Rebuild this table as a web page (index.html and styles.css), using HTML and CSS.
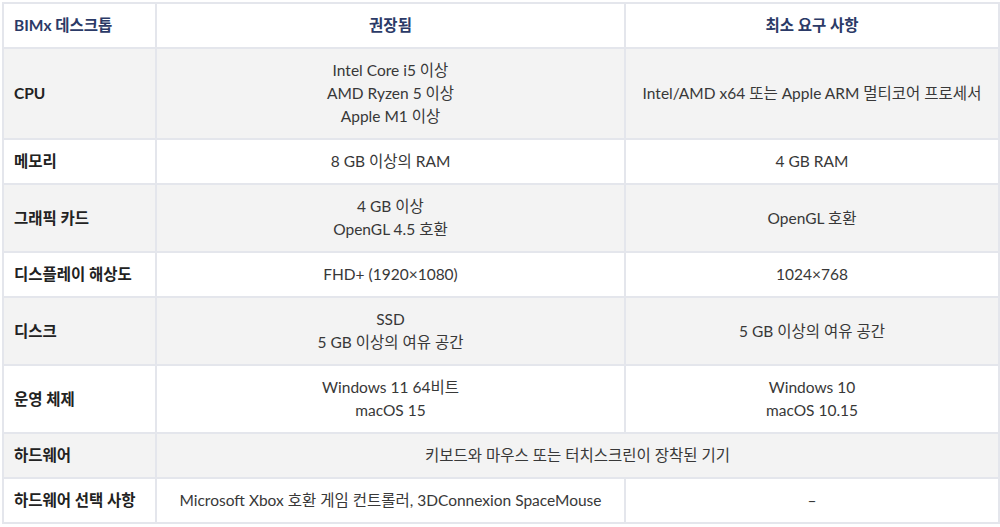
FILE: index.html
```html
<!DOCTYPE html>
<html lang="ko">
<head>
<meta charset="utf-8">
<link rel="stylesheet" href="styles.css">
</head>
<body>
<table class="spec">
  <colgroup>
    <col class="c1"><col class="c2"><col class="c3">
  </colgroup>
  <thead>
    <tr><th class="lbl">BIMx 데스크톱</th><th>권장됨</th><th>최소 요구 사항</th></tr>
  </thead>
  <tbody>
    <tr><th class="lbl">CPU</th><td>Intel Core i5 이상<br>AMD Ryzen 5 이상<br>Apple M1 이상</td><td>Intel/AMD x64 또는 Apple ARM 멀티코어 프로세서</td></tr>
    <tr><th class="lbl">메모리</th><td>8 GB 이상의 RAM</td><td>4 GB RAM</td></tr>
    <tr><th class="lbl">그래픽 카드</th><td>4 GB 이상<br>OpenGL 4.5 호환</td><td>OpenGL 호환</td></tr>
    <tr><th class="lbl">디스플레이 해상도</th><td>FHD+ (1920×1080)</td><td>1024×768</td></tr>
    <tr><th class="lbl">디스크</th><td>SSD<br>5 GB 이상의 여유 공간</td><td>5 GB 이상의 여유 공간</td></tr>
    <tr><th class="lbl">운영 체제</th><td>Windows 11 64비트<br>macOS 15</td><td>Windows 10<br>macOS 10.15</td></tr>
    <tr><th class="lbl">하드웨어</th><td colspan="2">키보드와 마우스 또는 터치스크린이 장착된 기기</td></tr>
    <tr><th class="lbl">하드웨어 선택 사항</th><td>Microsoft Xbox 호환 게임 컨트롤러, 3DConnexion SpaceMouse</td><td>–</td></tr>
  </tbody>
</table>
</body>
</html>
```
FILE: styles.css
```css
html, body {
  margin: 0;
  padding: 0;
  background: #ffffff;
}
body {
  padding: 2px 2px 0 2px;
  font-family: "Lato", "Noto Sans CJK KR", sans-serif;
  font-size: 15.5px;
  color: #383838;
}
.spec {
  width: 996px;
  border-collapse: collapse;
  table-layout: fixed;
}
.c1 { width: 153px; }
.c2 { width: 469px; }
.c3 { width: 374px; }
.spec th, .spec td {
  border: 2px solid #e4e6ec;
  padding: 10px 10px;
  line-height: 23px;
  text-align: center;
  vertical-align: middle;
  font-weight: 400;
}
.spec thead th {
  color: #2b3a67;
  font-weight: 700;
  background: #ffffff;
}
.spec th.lbl {
  text-align: left;
  font-weight: 700;
  color: #222222;
  white-space: nowrap;
}
.spec thead th.lbl {
  color: #2b3a67;
}
.spec tbody tr:nth-child(odd) { background: #f3f3f3; }
.spec tbody tr:nth-child(even) { background: #ffffff; }
```
